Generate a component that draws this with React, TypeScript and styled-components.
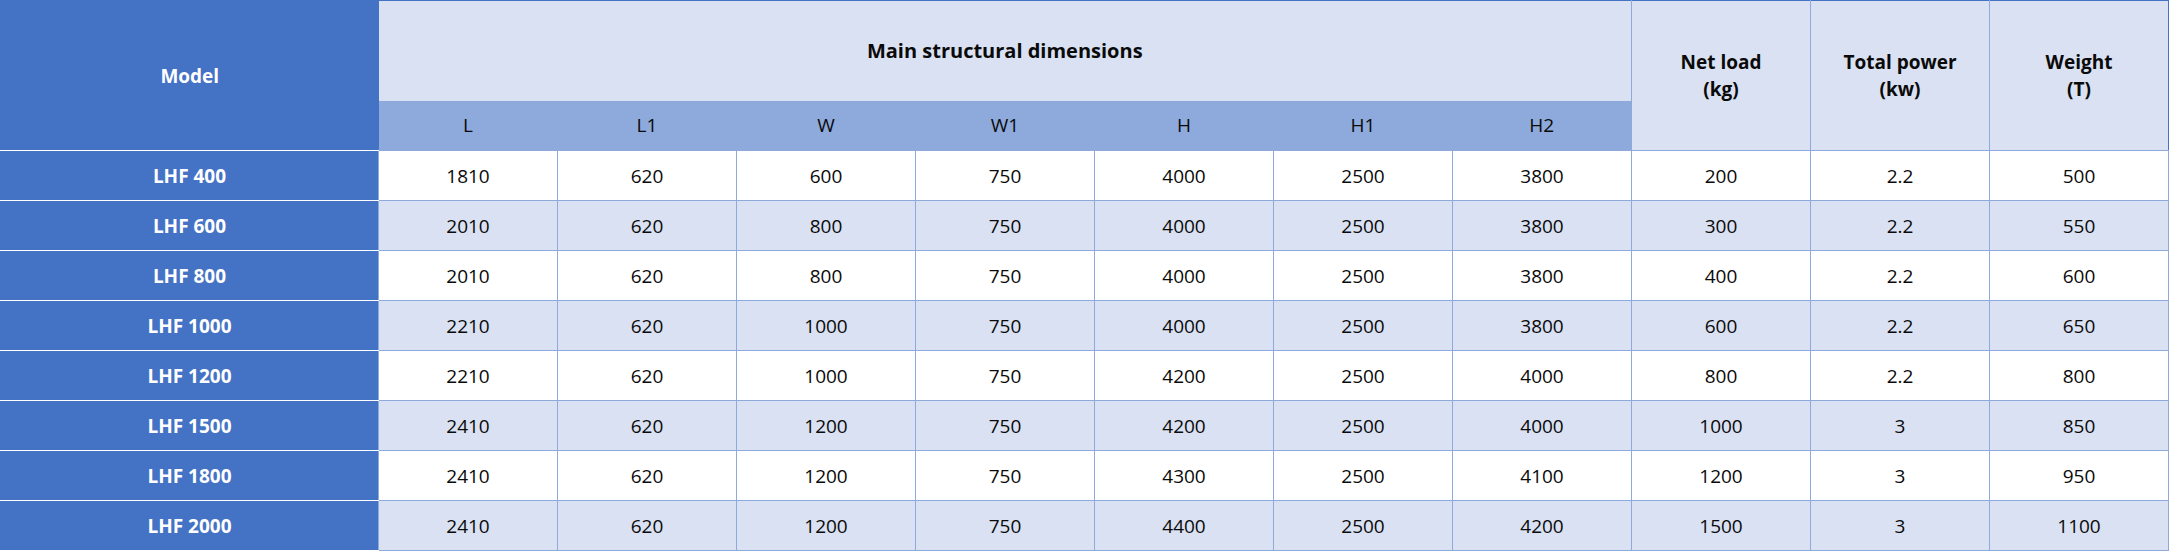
import React from 'react';
import styled, { createGlobalStyle } from 'styled-components';

const GlobalStyle = createGlobalStyle`
  html, body {
    margin: 0;
    padding: 0;
    background: #ffffff;
  }
  body {
    font-family: 'Open Sans', 'Noto Sans', 'Liberation Sans', sans-serif;
  }
`;

const Table = styled.table`
  width: 2169px;
  border-collapse: collapse;
  table-layout: fixed;
  border: 1px solid #4472c4;
  font-size: 19px;
  color: #0a0a0a;
`;

const HeadRow = styled.tr<{ $height: number }>`
  height: ${({ $height }) => $height}px;
`;

const BodyRow = styled.tr<{ $alt: boolean }>`
  height: 50px;
  background: ${({ $alt }) => ($alt ? '#d9e1f2' : '#ffffff')};
`;

const ModelHead = styled.th`
  background: #4472c4;
  color: #ffffff;
  font-weight: 700;
  text-align: center;
  vertical-align: middle;
  border-bottom: 1px solid #ffffff;
  padding: 0;
`;

const GroupHead = styled.th`
  background: #d9e1f2;
  font-size: 20px;
  font-weight: 700;
  text-align: center;
  vertical-align: middle;
  padding: 0;
`;

const SideHead = styled.th`
  background: #d9e1f2;
  font-weight: 700;
  line-height: 27px;
  text-align: center;
  vertical-align: middle;
  border-left: 1px solid #8ea9db;
  border-bottom: 1px solid #8ea9db;
  padding: 0;
`;

const SubHead = styled.th`
  background: #8ea9db;
  font-weight: 400;
  text-align: center;
  vertical-align: middle;
  padding: 0;
`;

const ModelCell = styled.td`
  background: #4472c4;
  color: #ffffff;
  font-weight: 700;
  text-align: center;
  vertical-align: middle;
  border-bottom: 1px solid #ffffff;
  padding: 0;
`;

const DataCell = styled.td`
  text-align: center;
  vertical-align: middle;
  border: 1px solid #8ea9db;
  padding: 0;
`;

const dims = ['L', 'L1', 'W', 'W1', 'H', 'H1', 'H2'];

const rows: [string, ...(string | number)[]][] = [
  ['LHF 400', 1810, 620, 600, 750, 4000, 2500, 3800, 200, '2.2', 500],
  ['LHF 600', 2010, 620, 800, 750, 4000, 2500, 3800, 300, '2.2', 550],
  ['LHF 800', 2010, 620, 800, 750, 4000, 2500, 3800, 400, '2.2', 600],
  ['LHF 1000', 2210, 620, 1000, 750, 4000, 2500, 3800, 600, '2.2', 650],
  ['LHF 1200', 2210, 620, 1000, 750, 4200, 2500, 4000, 800, '2.2', 800],
  ['LHF 1500', 2410, 620, 1200, 750, 4200, 2500, 4000, 1000, '3', 850],
  ['LHF 1800', 2410, 620, 1200, 750, 4300, 2500, 4100, 1200, '3', 950],
  ['LHF 2000', 2410, 620, 1200, 750, 4400, 2500, 4200, 1500, '3', 1100],
];

export default function App() {
  return (
    <>
      <GlobalStyle />
      <Table>
        <colgroup>
          <col style={{ width: 378 }} />
          {Array.from({ length: 10 }).map((_, i) => (
            <col key={i} style={{ width: 179 }} />
          ))}
        </colgroup>
        <thead>
          <HeadRow $height={100}>
            <ModelHead rowSpan={2}>Model</ModelHead>
            <GroupHead colSpan={7}>Main structural dimensions</GroupHead>
            <SideHead rowSpan={2}>
              Net load
              <br />
              (kg)
            </SideHead>
            <SideHead rowSpan={2}>
              Total power
              <br />
              (kw)
            </SideHead>
            <SideHead rowSpan={2}>
              Weight
              <br />
              (T)
            </SideHead>
          </HeadRow>
          <HeadRow $height={50}>
            {dims.map((d) => (
              <SubHead key={d}>{d}</SubHead>
            ))}
          </HeadRow>
        </thead>
        <tbody>
          {rows.map(([model, ...vals], i) => (
            <BodyRow key={model} $alt={i % 2 === 1}>
              <ModelCell>{model}</ModelCell>
              {vals.map((v, j) => (
                <DataCell key={j}>{v}</DataCell>
              ))}
            </BodyRow>
          ))}
        </tbody>
      </Table>
    </>
  );
}
